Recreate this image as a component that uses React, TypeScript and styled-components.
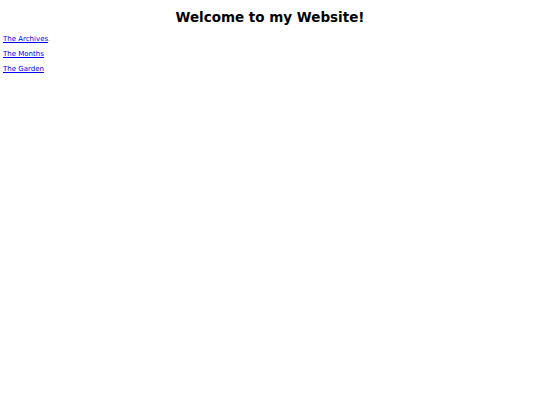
import styled, { createGlobalStyle } from 'styled-components';

const GlobalStyle = createGlobalStyle`
	body {
		margin: 0;
		padding: 0 3px;
		font-family: "DejaVu Sans", Verdana, sans-serif;
		background: #fff;
		color: #000;
	}
`

const Title = styled.h1`
	font-size: 13.5px;
	line-height: 16px;
	font-weight: 700;
	text-align: center;
	margin: 9px 0 10px;
`

const NavList = styled.nav`
	display: flex;
	flex-direction: column;
	gap: 7px;
	font-size: 7px;
	line-height: 8px;
`

const NavLink = styled.a`
	color: #00e;
	text-decoration: underline;
`

const Dot = styled.span`
	color: #8888bb;
`

export default function App() {
	return (
		<>
			<GlobalStyle />
			<Title>Welcome to my Website!</Title>
			<NavList>
				<div>
					<NavLink href="#archives">The Archives</NavLink>
					<Dot>.</Dot>
				</div>
				<div>
					<NavLink href="#months">The Months</NavLink>
				</div>
				<div>
					<NavLink href="#garden">The Garden</NavLink>
				</div>
			</NavList>
		</>
	);
}
